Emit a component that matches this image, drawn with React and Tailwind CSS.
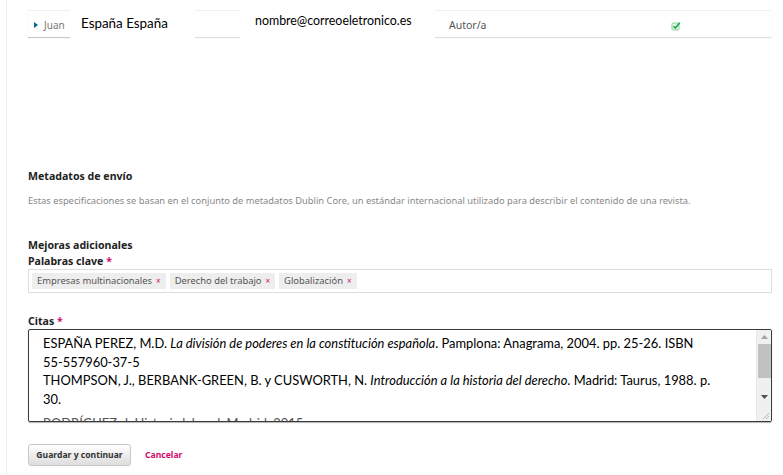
import React from 'react';

const ojs = { fontFamily: '"Noto Sans", "Open Sans", sans-serif' };
const patch = { fontFamily: 'Lato, "Open Sans", sans-serif' };

function CheckIcon() {
  return (
    <svg width="10" height="10" viewBox="0 0 10 10">
      <rect x="1" y="2" width="7" height="7" rx="1" fill="#e6f6e9" stroke="#8fd49c" strokeWidth="1" />
      <path d="M2.5 5.2 L4.3 7 L8.8 1.8" fill="none" stroke="#1da84a" strokeWidth="1.6" />
    </svg>
  );
}

function Tag({ label }) {
  return (
    <span className="flex items-center h-4 px-[5px] bg-[#eeeeee] text-[9.4px] text-[#555] gap-[4px] rounded-[1px]">
      {label}
      <span className="text-[#d00a6c] text-[8px]">×</span>
    </span>
  );
}

function Scrollbar() {
  return (
    <div className="w-[15px] bg-[#f0f0f0] flex flex-col items-center border-l border-[#e8e8e8]">
      <div className="h-[14px] flex items-center justify-center">
        <svg width="7" height="4" viewBox="0 0 7 4"><path d="M0 4 L3.5 0 L7 4 Z" fill="#a3a3a3" /></svg>
      </div>
      <div className="w-[13px] h-[34px] bg-[#c1c1c1]" />
      <div className="flex-1" />
      <div className="h-[16px] flex items-center justify-center">
        <svg width="7" height="4" viewBox="0 0 7 4"><path d="M0 0 L3.5 4 L7 0 Z" fill="#505050" /></svg>
      </div>
      <div className="h-[16px] w-full flex items-end justify-end pr-px pb-px">
        <svg width="8" height="8" viewBox="0 0 8 8">
          <path d="M7 1 L1 7 M7 4 L4 7" stroke="#b5b5b5" strokeWidth="1" />
        </svg>
      </div>
    </div>
  );
}

export default function App() {
  return (
    <div className="w-[783px] h-[475px] bg-white overflow-hidden" style={ojs}>
      <div className="ml-[6px] h-full border-l border-[#eeeeee] pl-[21px] pr-[11px]">
        {/* Author row */}
        <div className="pt-[10px]">
          <div className="flex h-[27px] bg-white border-t border-[#f0f0f0] shadow-[0_1px_1px_rgba(0,0,0,0.15)] rounded-r-[2px]">
            <div className="w-[42px] flex items-center pt-[2px] pl-[6px] gap-[6px] rounded-l-[2px] shadow-[0_1px_1px_rgba(0,0,0,0.1)]">
              <svg width="4" height="6" viewBox="0 0 4 6"><path d="M0 0 L4 3 L0 6 Z" fill="#006798" /></svg>
              <span className="text-[10px] text-[#777]">Juan</span>
            </div>
            <div className="relative z-10 -mt-px -mb-[3px] w-[125px] bg-white flex items-start pl-[11px] pt-[5px] text-[13.4px] leading-[17px] text-black" style={patch}>
              España España
            </div>
            <div className="w-[45px]" />
            <div className="relative z-10 -mt-[11px] -mb-[3px] w-[195px] bg-white flex items-start pl-[15px] pt-[12px] text-[12.4px] leading-[17px] text-black" style={patch}>
              nombre@correoeletronico.es
            </div>
            <div className="flex-1 flex items-center pt-[3px] pl-[14px] text-[10.5px] text-[#555]">
              <span className="w-[222px]">Autor/a</span>
              <CheckIcon />
            </div>
          </div>
        </div>

        {/* Metadata */}
        <div className="mt-[132px] text-[10.6px] font-bold text-[#222] leading-[14px]">Metadatos de envío</div>
        <div className="mt-[11px] text-[9.33px] text-[#888] leading-[13px]">
          Estas especificaciones se basan en el conjunto de metadatos Dublin Core, un estándar internacional utilizado para describir el contenido de una revista.
        </div>

        <div className="mt-[31px] text-[10.6px] font-bold text-[#222] leading-[14px]">Mejoras adicionales</div>
        <div className="mt-[2px] text-[10.6px] font-bold text-[#222] leading-[14px]">
          Palabras clave <span className="text-[#d00a6c]">*</span>
        </div>
        <div className="mt-[1px] h-[24px] border border-[#dddddd] flex items-center gap-[4px] px-[3px]">
          <Tag label="Empresas multinacionales" />
          <Tag label="Derecho del trabajo" />
          <Tag label="Globalización" />
        </div>

        {/* Citas */}
        <div className="mt-[21px] text-[10.6px] font-bold text-[#222] leading-[14px]">
          Citas <span className="text-[#d00a6c]">*</span>
        </div>
        <div className="mt-[1px] h-[93px] border border-[#3a3a3a] rounded-[2px] flex overflow-hidden shadow-[0_1px_1px_rgba(0,0,0,0.3)]">
          <div className="flex-1 overflow-hidden pl-[14px] pt-[4px] text-[12.9px] leading-[18.5px] text-black whitespace-nowrap" style={patch}>
            <div>
              ESPAÑA PEREZ, M.D. <i>La división de poderes en la constitución española</i>. Pamplona: Anagrama, 2004. pp. 25-26. ISBN
            </div>
            <div>55-557960-37-5</div>
            <div>
              THOMPSON, J., BERBANK-GREEN, B. y CUSWORTH, N. <i>Introducción a la historia del derecho</i>. Madrid: Taurus, 1988. p.
            </div>
            <div>30.</div>
            <div className="mt-[6px] text-[#555]">RODRÍGUEZ, J. Historia laboral. Madrid, 2015.</div>
          </div>
          <Scrollbar />
        </div>

        {/* Buttons */}
        <div className="mt-[22px] flex items-center gap-[14px]">
          <button className="h-[22px] w-[103px] rounded-[3px] border border-[#c8c8c8] bg-gradient-to-b from-white to-[#dddddd] text-[8.6px] font-bold text-[#333]">
            Guardar y continuar
          </button>
          <span className="text-[8.6px] font-bold text-[#d00a6c]">Cancelar</span>
        </div>
      </div>
    </div>
  );
}
